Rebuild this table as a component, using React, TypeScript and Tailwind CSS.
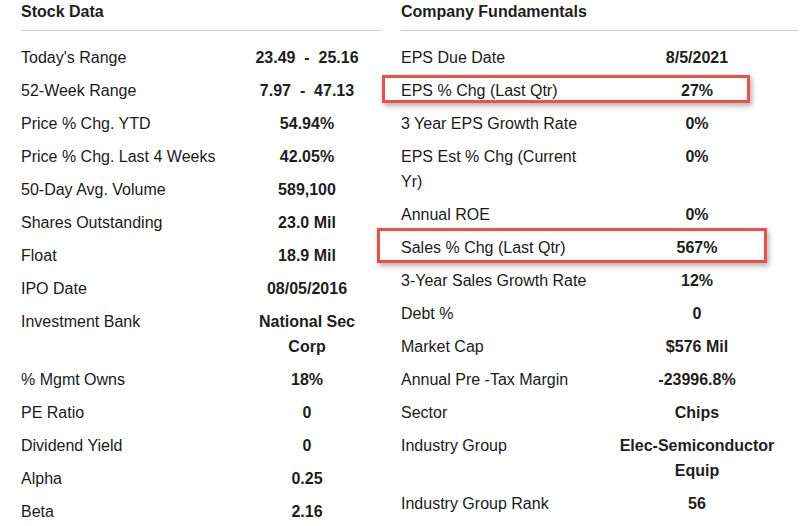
import React from "react";

type Row = { label: string; value: string };

const stock: Row[] = [
  { label: "Today's Range", value: "23.49  -  25.16" },
  { label: "52-Week Range", value: "7.97  -  47.13" },
  { label: "Price % Chg. YTD", value: "54.94%" },
  { label: "Price % Chg. Last 4 Weeks", value: "42.05%" },
  { label: "50-Day Avg. Volume", value: "589,100" },
  { label: "Shares Outstanding", value: "23.0 Mil" },
  { label: "Float", value: "18.9 Mil" },
  { label: "IPO Date", value: "08/05/2016" },
  { label: "Investment Bank", value: "National Sec Corp" },
  { label: "% Mgmt Owns", value: "18%" },
  { label: "PE Ratio", value: "0" },
  { label: "Dividend Yield", value: "0" },
  { label: "Alpha", value: "0.25" },
  { label: "Beta", value: "2.16" },
];

const fund: Row[] = [
  { label: "EPS Due Date", value: "8/5/2021" },
  { label: "EPS % Chg (Last Qtr)", value: "27%" },
  { label: "3 Year EPS Growth Rate", value: "0%" },
  { label: "EPS Est % Chg (Current Yr)", value: "0%" },
  { label: "Annual ROE", value: "0%" },
  { label: "Sales % Chg (Last Qtr)", value: "567%" },
  { label: "3-Year Sales Growth Rate", value: "12%" },
  { label: "Debt %", value: "0" },
  { label: "Market Cap", value: "$576 Mil" },
  { label: "Annual Pre -Tax Margin", value: "-23996.8%" },
  { label: "Sector", value: "Chips" },
  { label: "Industry Group", value: "Elec-Semiconductor Equip" },
  { label: "Industry Group Rank", value: "56" },
];

function Section({
  title,
  rows,
  labelW,
  valueW,
}: {
  title: string;
  rows: Row[];
  labelW: string;
  valueW: string;
}) {
  return (
    <div>
      <div className="h-[31px] border-b border-[#cccccc] pt-[2px] text-[16px] font-bold leading-[20px] text-[#1e1e1e]">
        {title}
      </div>
      <div className="mt-[10px] flex flex-col">
        {rows.map((r) => (
          <div key={r.label} className="flex items-start py-[4px] text-[16px] leading-[25px]">
            <div className={`${labelW} shrink-0 text-[#1a1a1a]`}>{r.label}</div>
            <div className={`${valueW} shrink-0 whitespace-pre-wrap px-[6px] text-center font-bold text-[#1e1e1e]`}>
              {r.value}
            </div>
          </div>
        ))}
      </div>
    </div>
  );
}

export default function App() {
  return (
    <div
      className="flex h-[526px] w-[805px] gap-[20px] overflow-hidden bg-white pl-[21px]"
      style={{ fontFamily: '"Liberation Sans", Arial, sans-serif' }}
    >
      <div className="w-[360px] shrink-0">
        <Section title="Stock Data" rows={stock} labelW="w-[212px]" valueW="w-[148px]" />
      </div>
      <div className="relative w-[397px] shrink-0">
        <Section title="Company Fundamentals" rows={fund} labelW="w-[195px]" valueW="w-[202px]" />
        <div className="absolute left-[-19px] top-[75px] h-[28px] w-[368px] border-[3px] border-[#f44b4b] shadow-[2px_3px_5px_rgba(0,0,0,0.3)]" />
        <div className="absolute left-[-24px] top-[228px] h-[35px] w-[390px] border-[3px] border-[#f44b4b] shadow-[2px_3px_5px_rgba(0,0,0,0.3)]" />
      </div>
    </div>
  );
}
